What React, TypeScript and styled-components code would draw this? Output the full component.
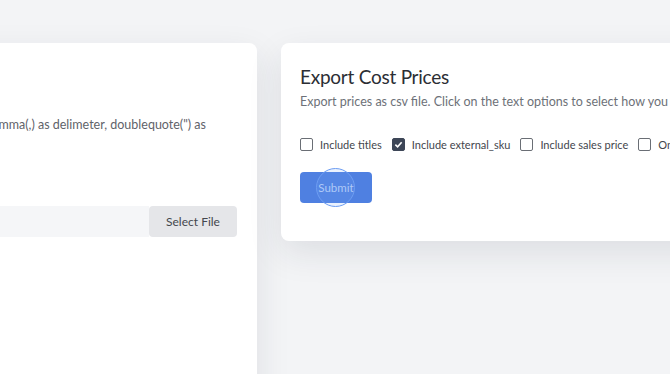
import React from "react";
import styled, { createGlobalStyle } from "styled-components";

const Global = createGlobalStyle`
  html, body { margin: 0; padding: 0; }
  body {
    background: #f3f4f6;
    font-family: Lato, "Open Sans", sans-serif;
    width: 670px;
    height: 374px;
    overflow: hidden;
  }
`;

const Page = styled.div`
  display: flex;
  align-items: flex-start;
  gap: 24px;
  padding-top: 43px;
  margin-left: -300px;
  height: 374px;
  box-sizing: border-box;
  overflow: hidden;
`;

const Card = styled.section<{ $width: number; $height?: number }>`
  flex: none;
  width: ${(p) => p.$width}px;
  height: ${(p) => (p.$height ? `${p.$height}px` : "400px")};
  background: #ffffff;
  border-radius: 8px;
  box-shadow: 0 12px 34px rgba(30, 40, 60, 0.1);
  padding: 22px 20px 22px 19px;
  box-sizing: border-box;
`;

const Title = styled.h2`
  margin: 0;
  font-size: 19px;
  font-weight: 400;
  letter-spacing: -0.25px;
  color: #2b2e34;
  line-height: 24px;
`;

const Subtitle = styled.p`
  margin: 4px 0 0;
  font-size: 12.5px;
  color: #6d7178;
  white-space: nowrap;
  line-height: 18px;
`;

const DescRow = styled.div`
  display: flex;
  justify-content: flex-end;
  margin-top: 27px;
  padding-right: 31px;
`;

const Desc = styled.p`
  flex: none;
  margin: 0;
  font-size: 12.5px;
  color: #5f636a;
  white-space: nowrap;
  line-height: 18px;
`;

const FileRow = styled.div`
  display: flex;
  margin-top: 72px;
  height: 31px;
`;

const FileField = styled.div`
  flex: 1;
  background: #f5f6f8;
  border-radius: 4px 0 0 4px;
`;

const FileButton = styled.button`
  width: 88px;
  border: none;
  background: #e5e6e9;
  border-radius: 4px;
  font-family: inherit;
  font-size: 12px;
  color: #44474d;
  padding: 0;
`;

const Options = styled.div`
  display: flex;
  align-items: center;
  margin-top: 27px;
  white-space: nowrap;
`;

const Option = styled.label`
  display: flex;
  align-items: center;
  gap: 7px;
  margin-right: 10px;
  font-size: 11px;
  color: #43464d;
`;

const Box = styled.span<{ $checked?: boolean }>`
  width: 13px;
  height: 13px;
  box-sizing: border-box;
  border: 1px solid ${(p) => (p.$checked ? "#3d4657" : "#6a6e75")};
  background: ${(p) => (p.$checked ? "#3d4657" : "#fff")};
  border-radius: 2px;
  display: flex;
  align-items: center;
  justify-content: center;
`;

const SubmitWrap = styled.div`
  position: relative;
  margin-top: 21px;
  width: 72px;
  height: 31px;
`;

const Submit = styled.button`
  width: 72px;
  height: 31px;
  border: none;
  border-radius: 4px;
  background: #4f80e1;
  color: #b8cff7;
  font-family: inherit;
  font-size: 11.5px;
  padding: 0;
`;

const ClickRing = styled.span`
  position: absolute;
  left: 16px;
  top: -4px;
  width: 39px;
  height: 39px;
  border-radius: 50%;
  border: 1.5px solid #6d9df2;
  background: rgba(120, 165, 245, 0.15);
  box-sizing: border-box;
  pointer-events: none;
`;

const Check = () => (
  <svg width="9" height="9" viewBox="0 0 10 10">
    <path d="M1.5 5.2 L4 7.5 L8.5 2.5" fill="none" stroke="#fff" strokeWidth="1.8" />
  </svg>
);

export default function App() {
  return (
    <>
      <Global />
      <Page>
        <Card $width={557}>
          <Title>Import Cost Prices</Title>
          <DescRow>
            <Desc>Import cost prices from a csv file. Uses comma(,) as delimeter, doublequote(") as</Desc>
          </DescRow>
          <FileRow>
            <FileField />
            <FileButton>Select File</FileButton>
          </FileRow>
        </Card>
        <Card $width={560} $height={198}>
          <Title>Export Cost Prices</Title>
          <Subtitle>Export prices as csv file. Click on the text options to select how you want the file</Subtitle>
          <Options>
            <Option><Box />Include titles</Option>
            <Option><Box $checked><Check /></Box>Include external_sku</Option>
            <Option><Box />Include sales price</Option>
            <Option><Box />Only active products</Option>
          </Options>
          <SubmitWrap>
            <Submit>Submit</Submit>
            <ClickRing />
          </SubmitWrap>
        </Card>
      </Page>
    </>
  );
}
